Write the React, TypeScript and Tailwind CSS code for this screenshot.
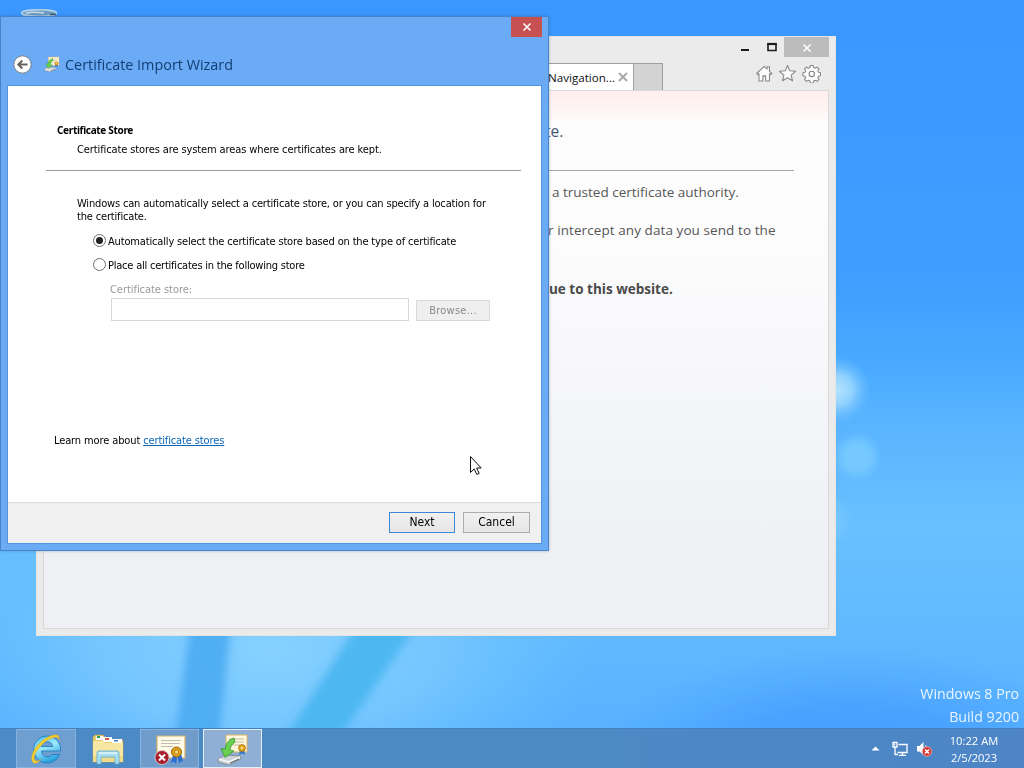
import type { ReactNode } from "react";

function Wallpaper() {
  return (
    <svg className="absolute inset-0" width="1024" height="768" viewBox="0 0 1024 768">
      <defs>
        <linearGradient id="sky" x1="0" y1="0" x2="0" y2="1">
          <stop offset="0" stopColor="#3a97ff" />
          <stop offset="0.38" stopColor="#3f9fff" />
          <stop offset="0.46" stopColor="#48a8ff" />
          <stop offset="0.55" stopColor="#59b4ff" />
          <stop offset="0.68" stopColor="#68c0ff" />
          <stop offset="0.8" stopColor="#62bbff" />
          <stop offset="0.95" stopColor="#58b2ff" />
        </linearGradient>
        <radialGradient id="glow">
          <stop offset="0" stopColor="#86d1ff" />
          <stop offset="0.5" stopColor="#7bcaff" stopOpacity="0.8" />
          <stop offset="1" stopColor="#6cc2ff" stopOpacity="0" />
        </radialGradient>
        <radialGradient id="corner">
          <stop offset="0" stopColor="#429aff" />
          <stop offset="0.5" stopColor="#479fff" stopOpacity="0.8" />
          <stop offset="1" stopColor="#4da6ff" stopOpacity="0" />
        </radialGradient>
        <radialGradient id="bokeh">
          <stop offset="0" stopColor="#b4e3ff" />
          <stop offset="0.45" stopColor="#98d6ff" stopOpacity="0.9" />
          <stop offset="1" stopColor="#6cbfff" stopOpacity="0" />
        </radialGradient>
        <filter id="soft" x="-30%" y="-30%" width="160%" height="160%">
          <feGaussianBlur stdDeviation="4" />
        </filter>
      </defs>
      <rect width="1024" height="768" fill="url(#sky)" />
      <ellipse cx="270" cy="650" rx="330" ry="170" fill="url(#glow)" />
      <ellipse cx="850" cy="765" rx="260" ry="120" fill="url(#corner)" />
      <g filter="url(#soft)">
        <path d="M190 625H231L219 740H175Z" fill="#48a8f1" opacity="0.85" />
        <path d="M360 620H420L338 740H284Z" fill="#47b4ef" opacity="0.85" />
        <circle cx="857" cy="457" r="19" fill="#7fcfff" opacity="0.75" />
        <ellipse cx="833" cy="520" rx="14" ry="20" fill="#7ccbff" opacity="0.55" />
      </g>
      <circle cx="837" cy="390" r="34" fill="url(#bokeh)" />
      {/* rim of the recycle bin behind the wizard */}
      <path d="M21 12Q39 6 57 12L54 17H24Z" fill="#7fb0d6" />
      <ellipse cx="39" cy="13" rx="17.5" ry="3.2" fill="#6d9cc0" stroke="#b3d3e8" strokeWidth="1.4" />
      <path d="M26 13.500Q32 11.500 44 13" stroke="#c3d9e8" strokeWidth="1.5" fill="none" />
      <path d="M50 14.500h6" stroke="#3c556b" strokeWidth="1.5" />
    </svg>
  );
}

function ImportIcon({ size }: { size: number }) {
  return (
    <svg width={size} height={size} viewBox="0 0 32 32">
      <path d="M9 2h21v17H9z" fill="#fff8dd" stroke="#d9b66d" strokeWidth="1" />
      <path d="M12 6h15M12 9h15M14 12h9" stroke="#b9b49d" strokeWidth="0.9" />
      <path d="M23 17l-1 5 3-1.500 3 1.500-1-6z" fill="#3378c8" />
      <circle cx="25" cy="15" r="3.400" fill="#e3a61c" stroke="#a86c0b" strokeWidth="0.8" />
      <circle cx="25" cy="15" r="1.300" fill="#f9de76" />
      <path d="M1 26l7-4 15 1 1 3-12 6-11-3z" fill="#cdd2d6" stroke="#7b8288" strokeWidth="0.8" />
      <path d="M2 26l10 3 11-5" stroke="#f7f9fa" strokeWidth="1.500" fill="none" />
      <path d="M13 30l9-4" stroke="#5b6268" strokeWidth="1" />
      <path d="M17 5Q8 8 8.500 16L4 15.500 8 24.500 17 18 13 17Q13 12 18 9Z" fill="#68cf51" stroke="#34942f" strokeWidth="0.8" />
    </svg>
  );
}

function CertErrorIcon() {
  return (
    <svg width="32" height="32" viewBox="0 0 32 32">
      <path d="M3 3h28v22H3z" fill="#fffbe9" stroke="#d8b16c" strokeWidth="1.2" />
      <path d="M7 7.500h20M7 10.500h19M7 13.500h12" stroke="#b9b7ac" strokeWidth="0.9" />
      <path d="M19 22l-2 8 3-1.500 2 2.500 1-7zM23 22l2 8 2-1.500 2 0-2-8z" fill="#2b6dd0" />
      <circle cx="22.500" cy="19" r="5" fill="#e0a11c" stroke="#9c650c" strokeWidth="1" />
      <circle cx="22.500" cy="19" r="2" fill="#fae07f" stroke="#a46c10" strokeWidth="0.7" />
      <circle cx="8" cy="24.500" r="7" fill="#a81f2b" stroke="#d8c5c8" strokeWidth="0.9" />
      <path d="M5 21.500l6 6M11 21.500l-6 6" stroke="#fff" strokeWidth="2.100" />
    </svg>
  );
}

function ExplorerIcon() {
  return (
    <svg width="34" height="32" viewBox="0 0 34 32">
      <path d="M2 4l2-2h8l2 2v3h18v22H2z" fill="#e9cb72" stroke="#bd9a45" strokeWidth="0.6" />
      <path d="M5 3h7v4H5z" fill="#f7fbff" />
      <path d="M6 3h3v2H6z" fill="#2e9a54" />
      <path d="M12 4h9v5h-9z" fill="#fff" />
      <path d="M14 5h4v2h-4z" fill="#d65a42" />
      <path d="M21 6h10v4H21z" fill="#fff" />
      <path d="M23 7h4v1.500h-4z" fill="#3f7dcb" />
      <path d="M2 8h10l2 2h18v19H2z" fill="#f7e7a2" />
      <path d="M2 23h30v6H2z" fill="#ecd483" opacity="0.7" />
      <path d="M6 31V20q0-2 2-2h18q2 0 2 2v11h-4v-7H10v7z" fill="#a9dff1" stroke="#5ba9ca" strokeWidth="0.8" />
      <path d="M8 20h18" stroke="#effcff" strokeWidth="1.200" />
    </svg>
  );
}

function IeIcon() {
  return (
    <svg width="32" height="32" viewBox="0 0 32 32">
      <defs>
        <linearGradient id="ieBlue" x1="0" y1="0" x2="0.4" y2="1">
          <stop offset="0" stopColor="#46bdee" />
          <stop offset="0.5" stopColor="#9ee8fd" />
          <stop offset="1" stopColor="#2aa3e0" />
        </linearGradient>
      </defs>
      <path
        fillRule="evenodd"
        d="M17 3a13.500 13.500 0 1 0 12.600 18.500h-7.300a6 6 0 0 1-10.800-3.500H30.500A13.500 13.500 0 0 0 17 3zM11.500 13.500a5.700 5.700 0 0 1 11.200 0z"
        fill="url(#ieBlue)"
        stroke="#1776bb"
        strokeWidth="0.8"
      />
      <path d="M3.500 30C-3 24 9 5 24 2q6-1 5 5 0-3.500-5-2.500C12 7 1 24 5 27.500q2 1.500 6-1Q6 31.500 3.500 30z" fill="#f4cf32" stroke="#cfa016" strokeWidth="0.5" />
    </svg>
  );
}

function BrowserWindow() {
  return (
    <div className="absolute left-[36px] top-[36px] flex h-[600px] w-[800px] flex-col border border-[#e4e4e2] bg-[#ebebeb] px-[6px] pb-[6px]">
      <div className="flex h-[20px] justify-end">
        <svg className="mr-[3px]" width="44" height="20" viewBox="0 0 44 20">
          <path d="M4 12h8v2H4z" fill="#1c1c1c" />
          <path d="M31 7h8v6.500h-8z" fill="none" stroke="#1c1c1c" strokeWidth="1.600" />
          <path d="M30.200 7h9.600" stroke="#1c1c1c" strokeWidth="2.200" />
        </svg>
        <div className="flex w-[45px] items-center justify-center bg-[#bcbcbc] pt-px">
          <svg width="10" height="10" viewBox="0 0 10 10">
            <path d="M1.500 1.500l7 7M8.500 1.500l-7 7" stroke="#fff" strokeWidth="1.500" />
          </svg>
        </div>
      </div>
      <div className="flex h-[33px] items-end">
        <div className="flex h-[27px] w-[591px] items-center justify-end border border-b-0 border-[#a0a0a0] bg-white pr-[5px] font-['Open_Sans',sans-serif] text-[11.6px] text-[#111]">
          <span className="pt-[2px]">Navigation...</span>
          <svg className="ml-[3px]" width="10" height="10" viewBox="0 0 10 10">
            <path d="M1 1l8 8M9 1l-8 8" stroke="#a9a9a9" strokeWidth="2" />
          </svg>
        </div>
        <div className="h-[27px] w-[29px] border border-b-0 border-l-0 border-[#a0a0a0] bg-[#d3d3d3]" />
        <svg className="mb-[7px] ml-auto mr-[8px]" width="66" height="19" viewBox="0 0 68 20" fill="#fdfdfd" stroke="#858585" strokeWidth="1.100" strokeLinejoin="round">
          <path d="M1 10L9 2.500l3 2.800V3h2.500v4.700L17 10l-1.300 1.200-1.200-1V18h-4v-5.500h-3V18h-4v-7.800l-1.200 1z" />
          <path d="M33.500 1.500l2.400 5.700 6.100.5-4.700 4 1.500 6-5.300-3.200-5.300 3.200 1.500-6-4.700-4 6.100-.5z" />
          <path d="M56.500 2.300h3l.5 2.200 1.600.7 2-1.200 2 2-1.200 2 .7 1.600 2.200.5v3l-2.200.5-.7 1.500 1.200 2-2 2-2-1.200-1.600.7-.5 2.100h-3l-.5-2.100-1.600-.7-2 1.200-2-2 1.200-2-.7-1.500-2.200-.5v-3l2.200-.5.7-1.600-1.200-2 2-2 2 1.200 1.600-.7z" transform="translate(1 -.8)" />
          <circle cx="59" cy="10.500" r="2.800" />
        </svg>
      </div>
      <div className="flex-1 border border-[#d9d9d9] bg-[linear-gradient(180deg,#ffefee_0px,#fff3f2_15px,#fefdfd_34px,#fcfcfd_160px,#f4f5f8_330px,#eef0f4_470px,#eff0f3_537px)] font-['Open_Sans',sans-serif] text-[#575757]">
        <div className="mr-[34px] flex h-[80px] items-start border-b border-[#a3a6aa] pl-[501px] pt-[28px] text-[15.500px] leading-[24px] text-[#465a75]">
          te.
        </div>
        <div className="flex flex-col pl-[508px] text-[13.500px] leading-[20px]">
          <p className="mt-[11px] whitespace-nowrap">a trusted certificate authority.</p>
          <p className="-ml-[4px] mt-[18px] whitespace-nowrap tracking-[0.080px]">r intercept any data you send to the</p>
          <p className="-ml-[3px] mt-[39px] whitespace-nowrap font-bold text-[#4a4a4a]">ue to this website.</p>
        </div>
      </div>
    </div>
  );
}

function Radio({ checked, children }: { checked?: boolean; children: ReactNode }) {
  return (
    <label className="flex h-[13px] items-center gap-[3px] whitespace-nowrap">
      <span className="flex size-[13px] shrink-0 items-center justify-center rounded-full border border-[#707070] bg-white">
        {checked && <span className="size-[7px] rounded-full bg-[#222]" />}
      </span>
      <span className="pt-px">{children}</span>
    </label>
  );
}

function WizardDialog() {
  return (
    <div className="absolute left-0 top-[16px] flex h-[535px] w-[549px] flex-col border border-[#4784c9] bg-[#6baaf5] pb-[6px] pl-[6px] pr-[6px] shadow-[0_0_3px_rgba(40,80,130,0.35)]">
      <div className="flex h-[20px] justify-end">
        <button className="flex w-[31px] items-center justify-center bg-[#c75050]">
          <svg width="10" height="10" viewBox="0 0 10 10">
            <path d="M1.500 1.500l7 7M8.500 1.500l-7 7" stroke="#fff" strokeWidth="1.600" />
          </svg>
        </button>
      </div>
      <div className="flex h-[48px] items-start pl-[6px] pt-[18px]">
        <svg width="19" height="19" viewBox="0 0 19 19">
          <circle cx="9.500" cy="9.500" r="8.700" fill="#fff" stroke="#777d86" strokeWidth="1" />
          <path d="M14.500 9.500H5.500M9.300 5.500l-4 4 4 4" stroke="#6b625f" strokeWidth="2" fill="none" />
        </svg>
        <div className="ml-[12px] mt-px">
          <ImportIcon size={16} />
        </div>
        <h1 className="ml-[5px] font-['Open_Sans',sans-serif] text-[14.400px] leading-[20px] text-[#123f74]">
          Certificate Import Wizard
        </h1>
      </div>
      <div className="flex flex-1 flex-col border border-[#5595df] bg-white text-[11px] leading-[13px] text-black">
        <div className="ml-[38px] mr-[20px] h-[85px] border-b border-[#9b9b9b] pt-[38px]">
          <h2 className="pl-[11px] font-['Noto_Sans',sans-serif] text-[10px] font-bold tracking-[-0.320px]">
            Certificate Store
          </h2>
          <p className="mt-[6px] pl-[31px] tracking-[-0.110px]">
            Certificate stores are system areas where certificates are kept.
          </p>
        </div>
        <div className="flex flex-1 flex-col pl-[69px]">
          <p className="mt-[26px] whitespace-nowrap tracking-[-0.170px]">
            Windows can automatically select a certificate store, or you can specify a location for
            <br />
            the certificate.
          </p>
          <div className="mt-[11px] flex flex-col gap-[11px] pl-[16px]">
            <Radio checked>
              <span className="-ml-px tracking-[-0.160px]">
                Automatically select the certificate store based on the type of certificate
              </span>
            </Radio>
            <Radio>
              <span className="-ml-px tracking-[-0.220px]">Place all certificates in the following store</span>
            </Radio>
          </div>
          <p className="mt-[12px] pl-[33px] tracking-[-0.050px] text-[#9a9a9a]">Certificate store:</p>
          <div className="mt-[2px] flex items-center gap-[7px] pl-[34px]">
            <div className="h-[23px] w-[298px] border border-[#d9d9d9] bg-white" />
            <button className="mt-px h-[21px] w-[74px] border border-[#d9d9d9] bg-[#efefef] tracking-[0.250px] text-[#8a8a8a]">
              Browse...
            </button>
          </div>
          <p className="-ml-[23px] mt-[113px] tracking-[-0.120px]">
            Learn more about <a className="text-[#0b66b8] underline">certificate stores</a>
          </p>
        </div>
        <div className="flex h-[41px] items-start justify-end gap-[8px] border-t border-[#dcdcdc] bg-[#f0f0f0] pr-[11px] pt-[9px] text-[12px]">
          <button className="h-[21px] w-[66px] border border-[#3c88d8] bg-linear-to-b from-[#f1f1f1] to-[#e5e5e5]">Next</button>
          <button className="h-[21px] w-[67px] border border-[#acacac] bg-linear-to-b from-[#f1f1f1] to-[#e5e5e5]">Cancel</button>
        </div>
      </div>
    </div>
  );
}

function Taskbar() {
  return (
    <div className="flex h-[40px] border-t border-[#4380bd] bg-linear-to-r from-[#4c8ac6] via-[#4d8ac3] to-[#4d85c6] pl-[16px]">
      <div className="flex gap-[2px]">
        <div className="flex w-[60px] items-center justify-center border border-[#86b2dd] bg-[#6f9fd1]">
          <IeIcon />
        </div>
        <div className="flex w-[60px] items-center justify-center">
          <ExplorerIcon />
        </div>
        <div className="flex w-[59px] items-center justify-center border border-[#8bb4dc] bg-[#6f9ccb]">
          <CertErrorIcon />
        </div>
        <div className="ml-[2px] flex w-[59px] items-center justify-center border border-[#e1effb] bg-[#90afd5]">
          <ImportIcon size={32} />
        </div>
      </div>
      <div className="ml-auto flex items-center">
        <svg className="mr-[12px]" width="9" height="5" viewBox="0 0 9 5">
          <path d="M0.500 4.500L4.500 0.500l4 4z" fill="#fff" />
        </svg>
        <svg className="mr-[7px]" width="17" height="16" viewBox="0 0 17 16" fill="none" stroke="#fff" strokeWidth="1.300">
          <path d="M6.500 3.500H15v8H5.500" />
          <path d="M10.500 11.500V14M7 14.300h7" />
          <path d="M1 1.500h4v4.500H1zM3 6v8M3 13.500h3" />
          <path d="M2.500 2.500v2" />
        </svg>
        <svg className="mr-[16px]" width="17" height="16" viewBox="0 0 17 16">
          <path d="M1 5h2.500L7.500 1v13L3.500 10.500H1z" fill="#fff" />
          <path d="M9.500 4.500q1.500 1.500 1.500 4" stroke="#fff" fill="none" />
          <circle cx="11" cy="10.500" r="4.800" fill="#d33a35" stroke="#efb5b0" strokeWidth="0.7" />
          <path d="M9 8.500l4 4M13 8.500l-4 4" stroke="#fff" strokeWidth="1.500" />
        </svg>
        <div className="mr-[25px] flex w-[50px] flex-col items-center font-['Open_Sans',sans-serif] text-[11.200px] leading-[17px] text-white">
          <span className="whitespace-nowrap">10:22 AM</span>
          <span className="tracking-[-0.080px]">2/5/2023</span>
        </div>
      </div>
    </div>
  );
}

export default function App() {
  return (
    <div className="relative flex h-[768px] w-[1024px] flex-col overflow-hidden bg-[#4aa4ff] font-['DejaVu_Sans_Condensed','DejaVu_Sans',sans-serif]">
      <Wallpaper />
      <BrowserWindow />
      <WizardDialog />
      <svg className="absolute left-[469px] top-[455px]" width="14" height="21" viewBox="0 0 14 21">
        <path d="M1.500 1.500v16l3.700-3.600 2.600 5.600 2.400-1.100-2.600-5.400h4.600z" fill="#fff" stroke="#111" strokeWidth="1" />
      </svg>
      <div className="relative mt-auto flex flex-col">
        <div className="flex flex-col items-end pr-[5px] font-['Open_Sans',sans-serif] text-[14.200px] leading-[23px] text-[#eaf5ff]">
          <span>Windows 8 Pro</span>
          <span>Build 9200</span>
        </div>
        <Taskbar />
      </div>
    </div>
  );
}
